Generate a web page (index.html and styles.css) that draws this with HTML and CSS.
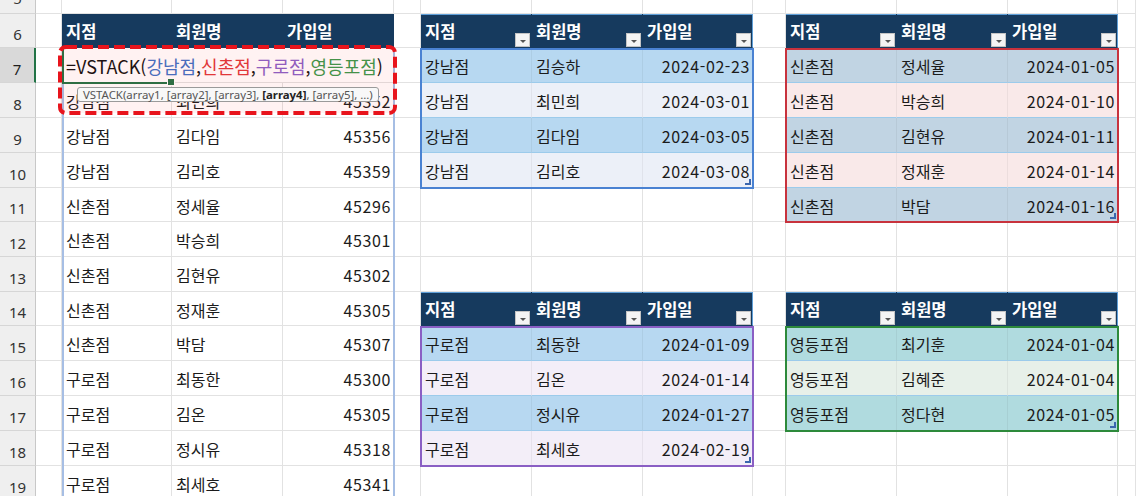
FILE: index.html
```html
<!DOCTYPE html>
<html lang="ko">
<head>
<meta charset="utf-8">
<title>VSTACK</title>
<link rel="stylesheet" href="styles.css">
</head>
<body>
<div class="sheet">
  <!-- row 5 (partial) -->
  <div class="rh r5"><span>5</span></div><div></div><div></div><div></div><div></div><div></div><div></div><div></div><div></div><div></div><div></div><div></div><div></div><div></div>
  <!-- row 6 -->
  <div class="rh">6</div><div></div>
  <div class="hd">지점</div><div class="hd">회원명</div><div class="hd">가입일</div><div></div>
  <div class="hd th">지점<i class="fb"></i></div><div class="hd th">회원명<i class="fb"></i></div><div class="hd th hl">가입일<i class="fb"></i></div><div></div>
  <div class="hd th">지점<i class="fb"></i></div><div class="hd th">회원명<i class="fb"></i></div><div class="hd th hl">가입일<i class="fb"></i></div><div></div>
  <!-- row 7 -->
  <div class="rh sel">7</div><div></div>
  <div class="fxc"><span class="fx">=VSTACK(<em class="k1">강남점</em>,<em class="k2">신촌점</em>,<em class="k3">구로점</em>,<em class="k4">영등포점</em>)</span></div><div></div><div></div><div></div>
  <div class="bl">강남점</div><div class="bl">김승하</div><div class="bl n">2024-02-23</div><div></div>
  <div class="sb">신촌점</div><div class="sb">정세율</div><div class="sb n">2024-01-05</div><div></div>
  <!-- row 8 -->
  <div class="rh">8</div><div></div>
  <div>강남점</div><div>최민희</div><div class="n">45352</div><div></div>
  <div class="pb">강남점</div><div class="pb">최민희</div><div class="pb n">2024-03-01</div><div></div>
  <div class="pk">신촌점</div><div class="pk">박승희</div><div class="pk n">2024-01-10</div><div></div>
  <!-- row 9 -->
  <div class="rh">9</div><div></div>
  <div>강남점</div><div>김다임</div><div class="n">45356</div><div></div>
  <div class="bl">강남점</div><div class="bl">김다임</div><div class="bl n">2024-03-05</div><div></div>
  <div class="sb">신촌점</div><div class="sb">김현유</div><div class="sb n">2024-01-11</div><div></div>
  <!-- row 10 -->
  <div class="rh">10</div><div></div>
  <div>강남점</div><div>김리호</div><div class="n">45359</div><div></div>
  <div class="pb">강남점</div><div class="pb">김리호</div><div class="pb n rz">2024-03-08</div><div></div>
  <div class="pk">신촌점</div><div class="pk">정재훈</div><div class="pk n">2024-01-14</div><div></div>
  <!-- row 11 -->
  <div class="rh">11</div><div></div>
  <div>신촌점</div><div>정세율</div><div class="n">45296</div><div></div>
  <div></div><div></div><div></div><div></div>
  <div class="sb">신촌점</div><div class="sb">박담</div><div class="sb n rz">2024-01-16</div><div></div>
  <!-- row 12 -->
  <div class="rh">12</div><div></div>
  <div>신촌점</div><div>박승희</div><div class="n">45301</div><div></div>
  <div></div><div></div><div></div><div></div><div></div><div></div><div></div><div></div>
  <!-- row 13 -->
  <div class="rh">13</div><div></div>
  <div>신촌점</div><div>김현유</div><div class="n">45302</div><div></div>
  <div></div><div></div><div></div><div></div><div></div><div></div><div></div><div></div>
  <!-- row 14 -->
  <div class="rh">14</div><div></div>
  <div>신촌점</div><div>정재훈</div><div class="n">45305</div><div></div>
  <div class="hd th">지점<i class="fb"></i></div><div class="hd th">회원명<i class="fb"></i></div><div class="hd th hl">가입일<i class="fb"></i></div><div></div>
  <div class="hd th">지점<i class="fb"></i></div><div class="hd th">회원명<i class="fb"></i></div><div class="hd th hl">가입일<i class="fb"></i></div><div></div>
  <!-- row 15 -->
  <div class="rh">15</div><div></div>
  <div>신촌점</div><div>박담</div><div class="n">45307</div><div></div>
  <div class="bl">구로점</div><div class="bl">최동한</div><div class="bl n">2024-01-09</div><div></div>
  <div class="te">영등포점</div><div class="te">최기훈</div><div class="te n">2024-01-04</div><div></div>
  <!-- row 16 -->
  <div class="rh">16</div><div></div>
  <div>구로점</div><div>최동한</div><div class="n">45300</div><div></div>
  <div class="lv">구로점</div><div class="lv">김온</div><div class="lv n">2024-01-14</div><div></div>
  <div class="gp">영등포점</div><div class="gp">김혜준</div><div class="gp n">2024-01-04</div><div></div>
  <!-- row 17 -->
  <div class="rh">17</div><div></div>
  <div>구로점</div><div>김온</div><div class="n">45305</div><div></div>
  <div class="bl">구로점</div><div class="bl">정시유</div><div class="bl n">2024-01-27</div><div></div>
  <div class="te">영등포점</div><div class="te">정다현</div><div class="te n rz">2024-01-05</div><div></div>
  <!-- row 18 -->
  <div class="rh">18</div><div></div>
  <div>구로점</div><div>정시유</div><div class="n">45318</div><div></div>
  <div class="lv">구로점</div><div class="lv">최세호</div><div class="lv n rz">2024-02-19</div><div></div>
  <div></div><div></div><div></div><div></div>
  <!-- row 19 -->
  <div class="rh">19</div><div></div>
  <div>구로점</div><div>최세호</div><div class="n">45341</div><div></div>
  <div></div><div></div><div></div><div></div><div></div><div></div><div></div><div></div>

  <!-- overlays placed on grid areas -->
  <span class="ov f0"></span>
  <span class="ov f1"></span>
  <span class="ov f2"></span>
  <span class="ov f3"></span>
  <span class="ov f4"></span>
  <span class="ov act"></span>
  <span class="ov edit"><svg class="dash" aria-hidden="true"><rect></rect></svg></span>
  <span class="ov tip">VSTACK(array1, [array2], [array3], <b>[array4]</b>, [array5], ...)</span>
</div>
</body>
</html>
```

FILE: styles.css
```css
* { box-sizing: border-box; }
html, body { margin: 0; padding: 0; background: #fff; }
body { width: 1136px; height: 496px; overflow: hidden; }

.sheet {
  position: relative;
  display: grid;
  grid-template-columns: 36px 26px 110px 111px 111px 27px 111px 111px 110px 33px 111px 111px 110px 18px;
  grid-template-rows: 14px 34px 35px 35px 35px 35px 34px 35px 35px 34px 35px 35px 35px 35px 35px;
  font-family: "Noto Sans CJK KR", "Noto Sans", sans-serif;
  font-size: 16px;
  line-height: 20px;
  color: #1b1b1b;
}

.sheet > div {
  display: flex;
  align-items: center;
  min-width: 0;
  padding: 2px 4px 0;
  white-space: nowrap;
  overflow: hidden;
  border-right: 1px solid #e2e2e2;
  border-bottom: 1px solid #e2e2e2;
}

/* row headers */
.sheet > .rh {
  justify-content: center;
  padding: 7px 0 0;
  background: #efefef;
  border-right-color: #c8c8c8;
  border-bottom-color: #d6d6d6;
  font-family: "Noto Sans", sans-serif;
  font-size: 15px;
  color: #333;
}
.sheet > .r5 { align-items: flex-start; padding: 0; }
.r5 span { display: block; margin-top: -12px; }
.sheet > .sel {
  background: #d9d9d9;
  border-right: 2px solid #217346;
  color: #1f1f1f;
}

/* table headers */
.sheet > .hd {
  padding: 0 4px;
  background: #163a5e;
  border-color: #163a5e;
  color: #fff;
  font-weight: 700;
  font-size: 16.5px;
}
.sheet > .th { box-shadow: inset 0 1px 0 #5f9fd8; }
.sheet > .hl { border-right-color: #5f9fd8; }
.fb {
  display: flex;
  justify-content: center;
  align-items: center;
  align-self: flex-end;
  width: 15px;
  height: 14px;
  margin-left: auto;
  margin-right: -3px;
  padding-top: 3px;
  background: #f4f4f4;
  border: 1px solid #c4c4c4;
}
.fb::after {
  content: "";
  border-left: 3px solid transparent;
  border-right: 3px solid transparent;
  border-top: 3px solid #555;
}

/* numbers / dates */
.sheet > .n { justify-content: flex-end; padding-right: 2px; letter-spacing: 0.6px; }

/* banded table rows */
.sheet > .bl { background: #b7d8f1; }
.sheet > .pb { background: #ecf0f8; }
.sheet > .sb { background: #c1d4e3; }
.sheet > .pk { background: #f9e9e9; }
.sheet > .lv { background: #f3eef8; }
.sheet > .te { background: #b0dbdf; }
.sheet > .gp { background: #e7f0e9; }
.sheet > .bl, .sheet > .pb, .sheet > .sb, .sheet > .pk,
.sheet > .lv, .sheet > .te, .sheet > .gp {
  border-bottom-color: #9ccbeb;
  border-right-color: rgba(0, 0, 0, 0.05);
}

/* table resize corner */
.sheet > .rz { position: relative; }
.rz::after {
  content: "";
  position: absolute;
  right: 1px;
  bottom: 2px;
  width: 4px;
  height: 4px;
  border-right: 2px solid #3b67ae;
  border-bottom: 2px solid #3b67ae;
}

/* formula being edited in B7 */
.sheet > .fxc { overflow: visible; padding: 0; align-items: stretch; }
.fx {
  position: relative;
  z-index: 2;
  flex-shrink: 0;
  display: flex;
  align-items: center;
  padding: 1px 8px 0 4px;
  background: #fff;
  font-size: 18px;
  color: #111;
}
.fx em { font-style: normal; }
.k1 { color: #3f72c6; }
.k2 { color: #e0393b; }
.k3 { color: #8a61c8; }
.k4 { color: #3a9a4c; }

/* overlays anchored to grid areas */
.ov { position: absolute; pointer-events: none; }
.f0 {
  grid-column: 3 / 6; grid-row: 3 / 16;
  inset: 0 -1px 0 0;
  border-left: 2px solid #a6bee4;
  border-right: 2px solid #a6bee4;
  z-index: 3;
}
.f1 { grid-column: 7 / 10; grid-row: 3 / 7; inset: 0 -1px -1px -1px; border: 2px solid #4a82d2; z-index: 3; }
.f2 { grid-column: 11 / 14; grid-row: 3 / 8; inset: 0 -1px -1px -1px; border: 2px solid #c8323d; z-index: 3; }
.f3 { grid-column: 7 / 10; grid-row: 11 / 15; inset: 0 -1px -1px -1px; border: 2px solid #8a5fc4; z-index: 3; }
.f4 { grid-column: 11 / 14; grid-row: 11 / 14; inset: 0 -1px -1px -1px; border: 2px solid #2d8a3b; z-index: 3; }

.act {
  grid-column: 3 / 4; grid-row: 3 / 4;
  inset: 0 0 -1px 0;
  border-left: 2px solid #217346;
  border-bottom: 2px solid #217346;
  z-index: 3;
}
.act::after {
  content: "";
  position: absolute;
  right: -3px;
  bottom: -4px;
  width: 6px;
  height: 6px;
  background: #217346;
  border: 1px solid #fff;
}

.edit { grid-column: 3 / 6; grid-row: 3 / 5; inset: -1px -1px 5px -2px; z-index: 4; }
.dash { position: absolute; left: 0; top: 0; width: 100%; height: 100%; overflow: visible; }
.dash rect {
  width: 100%;
  height: 100%;
  rx: 6px;
  fill: rgba(255, 40, 40, 0.06);
  stroke: #e8141c;
  stroke-width: 4px;
  stroke-dasharray: 11 5;
}

.tip {
  grid-column: 3 / 6; grid-row: 4 / 5;
  top: 4px;
  left: 15px;
  z-index: 5;
  padding: 0 5px;
  background: #f8f8f8;
  border: 1px solid #9a9a9a;
  border-radius: 3px;
  font-family: "Noto Sans", sans-serif;
  font-size: 11.4px;
  line-height: 13px;
  color: #555;
  white-space: nowrap;
}
.tip b { color: #222; }
```
